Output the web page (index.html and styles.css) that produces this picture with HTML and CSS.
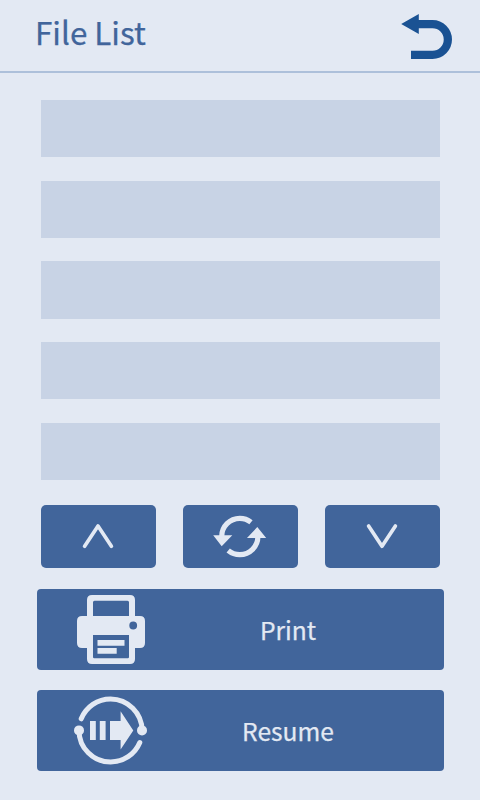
FILE: index.html
```html
<!DOCTYPE html>
<html lang="en">
<head>
<meta charset="utf-8">
<title>File List</title>
<link rel="stylesheet" href="styles.css">
</head>
<body>
<header class="header">
  <h1 class="title">File List</h1>
  <svg class="back" viewBox="400 12 54 50" role="img" aria-label="Back">
    <path d="M401.2 24 418.8 14V20H432.5A19.5 19.5 0 0 1 432.5 59H411V50.7H432.5A11.2 11.2 0 0 0 432.5 28.2H418.8V34Z"/>
  </svg>
</header>
<main>
  <div class="files">
    <div class="file"></div>
    <div class="file"></div>
    <div class="file"></div>
    <div class="file"></div>
    <div class="file"></div>
  </div>
  <div class="pager">
    <button class="nav" aria-label="Previous page">
      <svg class="nav-icon" viewBox="41 505 115.5 62.7"><path class="line" d="M84.6 546.2 98 526 111.4 546.2"/></svg>
    </button>
    <button class="nav" aria-label="Refresh">
      <svg class="nav-icon" viewBox="183 505 115.5 62.7">
        <path class="ring" d="M221.7 536.5A18.1 18.1 0 0 1 239.8 518.4A18.1 18.1 0 0 1 251 522.3M257.9 536.5A18.1 18.1 0 0 1 239.8 554.6A18.1 18.1 0 0 1 228.2 550.4"/>
        <path class="solid" d="M213.2 535.2H232.3L221.7 546.2ZM247 538H266.2L257.3 527Z"/>
      </svg>
    </button>
    <button class="nav" aria-label="Next page">
      <svg class="nav-icon" viewBox="325 505 115.5 62.7"><path class="line" d="M368.6 526 382 546.2 395.4 526"/></svg>
    </button>
  </div>
  <div class="actions">
    <button class="action">
      <svg class="action-icon" viewBox="73 589 76 81">
        <path class="solid" fill-rule="evenodd" d="M92 595H130Q135 595 135 600V616H140Q145 616 145 621V643Q145 648 140 648H135V659Q135 664 130 664H92Q87 664 87 659V648H82Q77 648 77 643V621Q77 616 82 616H87V600Q87 595 92 595ZM94.5 600.8Q93 600.8 93 602.3V616H129V602.3Q129 600.8 127.5 600.8ZM93 635V657Q93 658.2 94.2 658.2H127.8Q129 658.2 129 657V635ZM133.2 621.6A3.9 3.9 0 1 0 133.2 629.4A3.9 3.9 0 1 0 133.2 621.6Z"/>
        <path class="solid" d="M97.5 640H124.5V645.8H97.5ZM97.5 648H116.7V653.8H97.5Z"/>
      </svg>
      <span class="label">Print</span>
    </button>
    <button class="action">
      <svg class="action-icon" viewBox="73 690 76 81">
        <path class="orbit" d="M81.2 718.8A31.7 31.7 0 0 1 110.6 698.9A31.7 31.7 0 0 1 142.1 730.4M79 730.4A31.6 31.6 0 0 0 110.6 762A31.7 31.7 0 0 0 139.8 742.5"/>
        <circle class="solid" cx="79" cy="730.4" r="5"/>
        <circle class="solid" cx="142" cy="730.4" r="5"/>
        <path class="solid" d="M90 721H95.8V740H90ZM99.8 721H105.6V740H99.8ZM110 721H120.6V711.3L133.3 730.4 120.6 749.5V740H110Z"/>
      </svg>
      <span class="label">Resume</span>
    </button>
  </div>
</main>
</body>
</html>
```
FILE: styles.css
```css
* { box-sizing: border-box; }
body {
  margin: 0;
  width: 480px;
  height: 800px;
  background: #e3e9f3;
  font-family: "Noto Sans CJK SC", "Noto Sans", sans-serif;
}
.header {
  display: flex;
  justify-content: space-between;
  align-items: flex-start;
  height: 73px;
  padding: 12px 26px 0 35px;
  border-bottom: 2px solid #adc0da;
}
.title {
  margin: 0;
  font-size: 31.4px;
  line-height: 39px;
  font-weight: 400;
  color: #41659b;
  -webkit-text-stroke: 0.25px #41659b;
}
.back { width: 54px; height: 50px; fill: #1a5293; }
.files {
  display: grid;
  gap: 23.25px;
  padding: 27px 40px 0 41px;
}
.file { height: 57.4px; background: #c8d3e5; }
.pager {
  display: flex;
  justify-content: space-between;
  margin: 25.4px 40px 0 40.5px;
}
.nav, .action {
  display: flex;
  align-items: center;
  padding: 0;
  border: 0;
  border-radius: 4px;
  background: #41659b;
  color: #e3e9f3;
  font-family: inherit;
}
.nav { width: 115.5px; height: 62.7px; border-radius: 5px; }
.nav-icon { width: 115.5px; height: 62.7px; }
.solid { fill: #e3e9f3; }
.line, .ring, .orbit { fill: none; stroke: #e3e9f3; }
.line { stroke-width: 3.7; stroke-linecap: round; stroke-linejoin: round; }
.ring { stroke-width: 5.2; }
.orbit { stroke-width: 5; stroke-linecap: round; }
.actions {
  display: grid;
  gap: 20px;
  margin: 21px 36px 0 37px;
}
.action { height: 81px; padding: 0 17px 0 36px; }
.action-icon { width: 76px; height: 81px; flex: none; }
.label {
  flex: 1;
  padding-bottom: 2px;
  text-align: center;
  font-size: 24.6px;
  line-height: 36px;
  font-weight: 400;
  -webkit-text-stroke: 0.25px #e3e9f3;
}
```
